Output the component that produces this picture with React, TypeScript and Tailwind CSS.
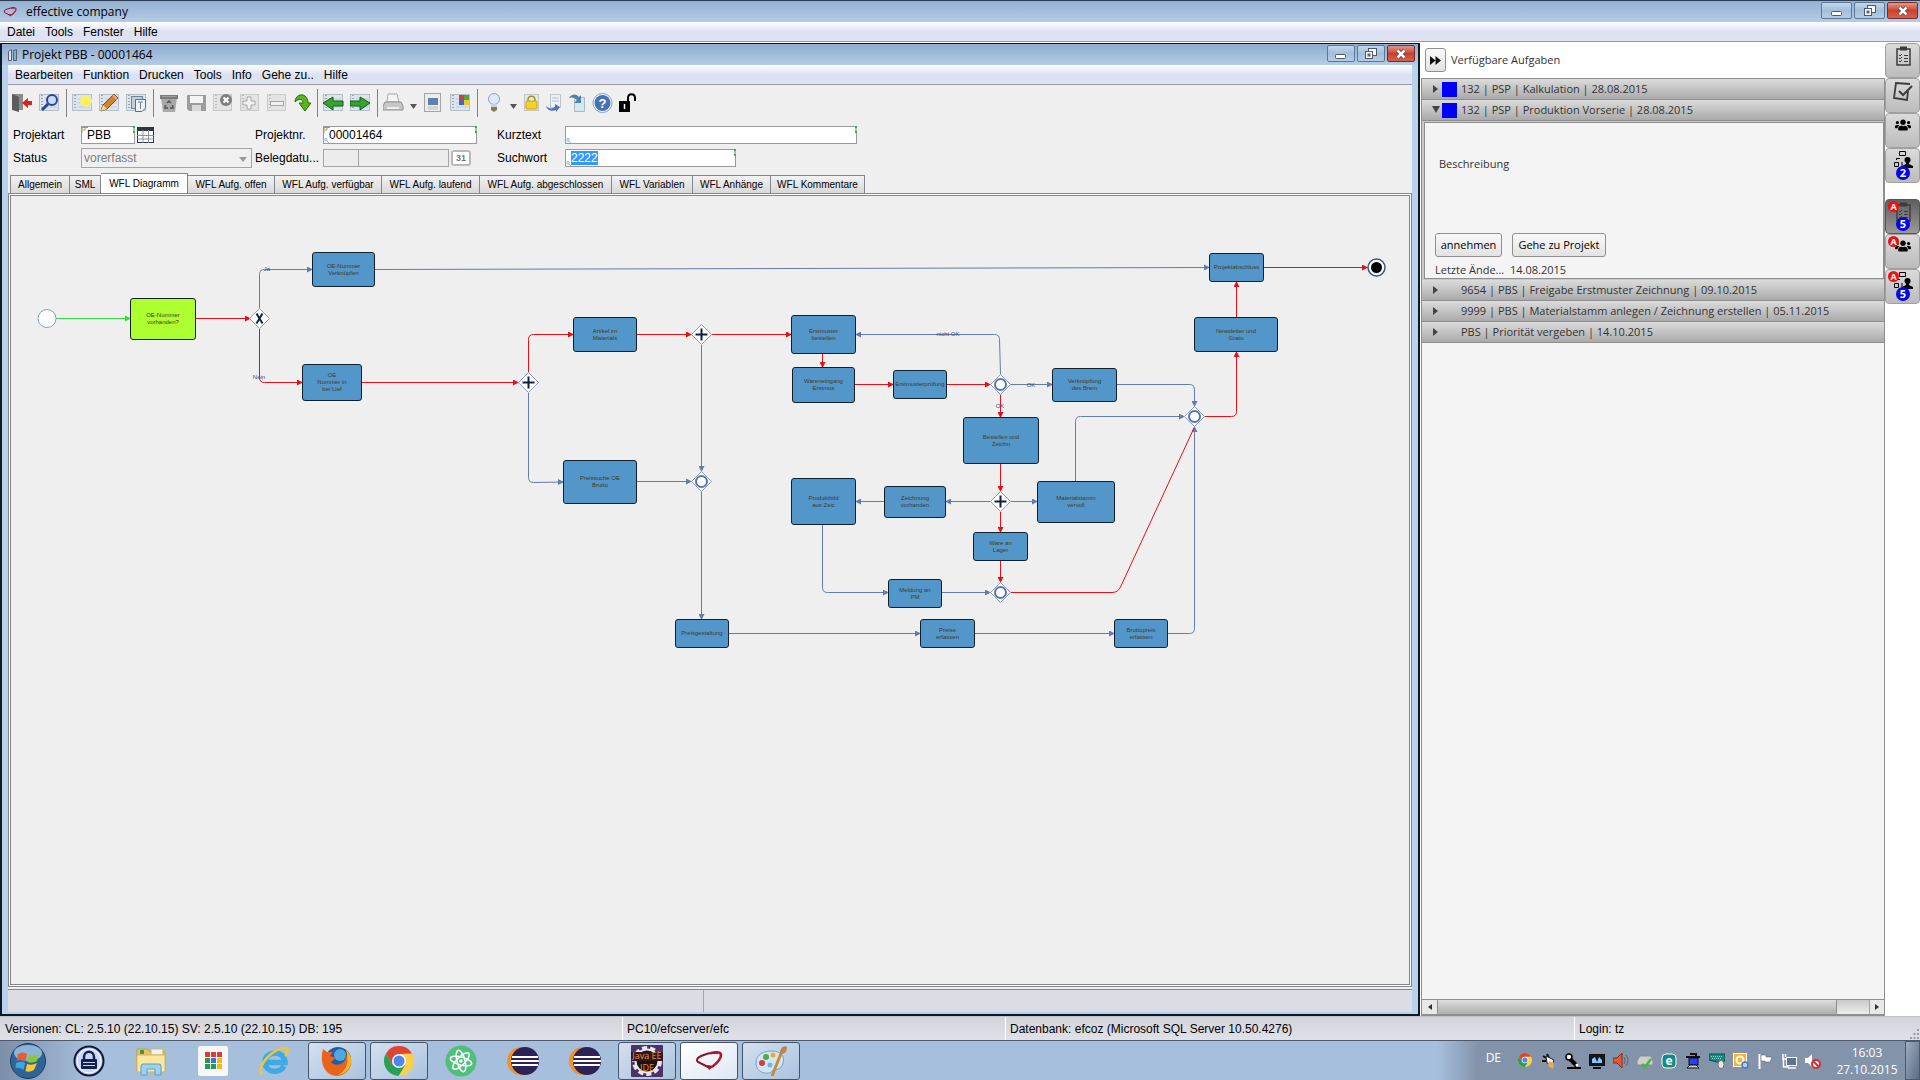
import React from "react";
import { FaUsers } from "react-icons/fa";

type TNode = {
  x: number;
  y: number;
  w: number;
  h: number;
  lines: string[];
  active?: boolean;
};

type TEdge = { d: string; color: "red" | "blue" | "green" };

const nodes: TNode[] = [
  { x: 119, y: 102, w: 66, h: 42, lines: ["OE-Nummer", "vorhanden?"], active: true },
  { x: 301, y: 56, w: 63, h: 35, lines: ["OE-Nummer", "Verknüpfen"] },
  { x: 291, y: 168, w: 60, h: 37, lines: ["OE", "Nummer in", "bei Lief"] },
  { x: 562, y: 121, w: 64, h: 35, lines: ["Artikel im", "Materials"] },
  { x: 780, y: 119, w: 65, h: 39, lines: ["Erstmuster", "bestellen"] },
  { x: 781, y: 171, w: 63, h: 36, lines: ["Wareneingang", "Erstmus"] },
  { x: 882, y: 174, w: 54, h: 29, lines: ["Erstmusterprüfung"] },
  { x: 952, y: 221, w: 76, h: 47, lines: ["Bestellen und", "Zeichn"] },
  { x: 552, y: 264, w: 74, h: 44, lines: ["Preissuche OE", "Brutto"] },
  { x: 780, y: 282, w: 65, h: 47, lines: ["Produktbild", "aus Zeic"] },
  { x: 873, y: 290, w: 62, h: 32, lines: ["Zeichnung", "vorhanden"] },
  { x: 962, y: 336, w: 55, h: 29, lines: ["Ware an", "Lager"] },
  { x: 877, y: 383, w: 54, h: 29, lines: ["Meldung an", "PM"] },
  { x: 664, y: 423, w: 54, h: 29, lines: ["Preisgestaltung"] },
  { x: 909, y: 423, w: 55, h: 29, lines: ["Preise", "erfassen"] },
  { x: 1103, y: 423, w: 54, h: 29, lines: ["Bruttopreis", "erfassen"] },
  { x: 1183, y: 121, w: 84, h: 35, lines: ["Newsletter und", "Gratu"] },
  { x: 1041, y: 172, w: 65, h: 34, lines: ["Verknüpfung", "des Brem"] },
  { x: 1026, y: 285, w: 78, h: 42, lines: ["Materialstamm", "vervoll"] },
  { x: 1198, y: 57, w: 55, h: 29, lines: ["Projektabschluss"] },
];

const edges: TEdge[] = [
  { d: "M45 122.5H119", color: "green" },
  { d: "M185 122.5H239", color: "red" },
  { d: "M248.5 112V78.5Q248.5 73.5 253.5 73.5H301", color: "blue" },
  { d: "M248.5 133V181.5Q248.5 186.5 253.5 186.5H291", color: "red" },
  { d: "M364 73.5L1198 71.5", color: "blue" },
  { d: "M351 186.5H507", color: "red" },
  { d: "M517.5 176V143.5Q517.5 138.5 522.5 138.5H562", color: "red" },
  { d: "M517.5 197V281.5Q517.5 286.5 522.5 286.5L552 286", color: "blue" },
  { d: "M626 138.5H680", color: "red" },
  { d: "M701 138.5H780", color: "red" },
  { d: "M690.5 149V275", color: "blue" },
  { d: "M626 285.5H680", color: "blue" },
  { d: "M690.5 296V423", color: "blue" },
  { d: "M811.5 158V171", color: "red" },
  { d: "M844 188.5H882", color: "red" },
  { d: "M936 188.5H979", color: "red" },
  { d: "M989.5 178L988.5 143.5Q988.5 138.5 983.5 138.5H845", color: "blue" },
  { d: "M989.5 199V221", color: "red" },
  { d: "M1000 188.5H1041", color: "blue" },
  { d: "M1106 188.5H1178.5Q1183.5 188.5 1183.5 193.5V210", color: "blue" },
  { d: "M1064.5 285V225.5Q1064.5 220.5 1069.5 220.5H1173", color: "blue" },
  { d: "M989.5 268V295", color: "red" },
  { d: "M979 305.5H935", color: "blue" },
  { d: "M1000 305.5H1026", color: "blue" },
  { d: "M873 305.5H845", color: "blue" },
  { d: "M989.5 316V336", color: "red" },
  { d: "M989.5 365V386", color: "red" },
  { d: "M811.5 329V391.5Q811.5 396.5 816.5 396.5H877", color: "blue" },
  { d: "M931 396.5H979", color: "blue" },
  { d: "M718 437.5H909", color: "blue" },
  { d: "M964 437.5H1103", color: "blue" },
  { d: "M1157 437.5H1178.5Q1183.5 437.5 1183.5 432.5V231", color: "blue" },
  { d: "M1194 220.5H1220.5Q1225.5 220.5 1225.5 215.5V156", color: "red" },
  { d: "M1225.5 121V86", color: "red" },
  { d: "M1253 71.5H1356", color: "red" },
];

const gateways = [
  { x: 248.5, y: 122.5, kind: "x" },
  { x: 517.5, y: 186.5, kind: "+" },
  { x: 690.5, y: 138.5, kind: "+" },
  { x: 690.5, y: 285.5, kind: "o" },
  { x: 989.5, y: 188.5, kind: "o" },
  { x: 989.5, y: 305.5, kind: "+" },
  { x: 989.5, y: 396.5, kind: "o" },
  { x: 1183.5, y: 220.5, kind: "o" },
];

const edgeLabels = [
  { x: 256, y: 75, text: "Ja" },
  { x: 248, y: 183, text: "Nein" },
  { x: 937, y: 140, text: "nicht OK" },
  { x: 1020, y: 191, text: "OK" },
  { x: 989, y: 212, text: "OK" },
];

const colors = { red: "#e31219", blue: "#657cab", green: "#2fdc3c" };

const Diagram = () => (
  <div className="relative min-h-[500px] flex-1 overflow-hidden bg-[#efefef]">
    <svg className="absolute inset-0 h-full w-full">
      <defs>
        {(["red", "blue", "green"] as const).map((c) => (
          <marker key={c} id={c} markerWidth="6" markerHeight="6" refX="5" refY="3" orient="auto">
            <path d="M0 0L6 3L0 6Z" fill={colors[c]} />
          </marker>
        ))}
      </defs>
      {edges.map((e) => (
        <path key={e.d} d={e.d} fill="none" stroke={colors[e.color]} markerEnd={`url(#${e.color})`} />
      ))}
      <path d="M1000 396.5H1101Q1107 396.5 1109.5 391L1183 232" fill="none" stroke={colors.red} />
      <circle cx="36" cy="122.5" r="9" fill="#fff" stroke="#8a9cc8" />
      <circle cx="1365.5" cy="71.5" r="8.5" fill="#fff" stroke="#3f5480" strokeWidth="1.5" />
      <circle cx="1365.5" cy="71.5" r="5.5" fill="#000" />
      {gateways.map((g) => (
        <g key={`${g.x}-${g.y}`} transform={`translate(${g.x} ${g.y})`}>
          <path d="M0-10L10 0L0 10L-10 0Z" fill="#fff" stroke="#8a9cc8" />
          {g.kind === "o" && <circle r="5.5" fill="#fff" stroke="#5e759f" strokeWidth="2" />}
          {g.kind === "+" && <path d="M-6 0H6M0-6V6" stroke="#14203a" strokeWidth="2" />}
          {g.kind === "x" && <path d="M-3-5L3 5M3-5L-3 5" stroke="#14203a" strokeWidth="2" />}
        </g>
      ))}
      {edgeLabels.map((l) => (
        <text key={`${l.x}-${l.y}`} x={l.x} y={l.y} fontSize="6" textAnchor="middle" fill="#3c4a78">
          {l.text}
        </text>
      ))}
    </svg>
    {nodes.map((n) => (
      <div
        key={`${n.x}-${n.y}`}
        className={`absolute flex flex-col items-center justify-center whitespace-nowrap rounded-[3px] border border-[#10202c] text-[6px] leading-[7px] text-[#453a1e] ${
          n.active ? "bg-[#adff2f]" : "bg-[#5396c9]"
        }`}
        style={{ left: n.x, top: n.y, width: n.w, height: n.h }}
      >
        {n.lines.map((line) => (
          <span key={line}>{line}</span>
        ))}
      </div>
    ))}
  </div>
);

const WindowButtons = ({ wide }: { wide?: boolean }) => {
  const size = `flex h-[17px] items-center justify-center rounded-[2px] border ${wide ? "w-[31px]" : "w-7"}`;
  const blue = "border-[#5d7896] bg-linear-to-b from-[#c3d6ea] via-[#a4bfdb] to-[#b4cde6]";
  return (
    <div className="flex gap-[2px] self-start pt-px">
      <button aria-label="Minimieren" className={`${size} ${blue}`}>
        <svg width="12" height="12">
          <rect x="0.5" y="6.5" width="10" height="4" rx="1" fill="#fff" stroke="#4d5a6b" />
        </svg>
      </button>
      <button aria-label="Wiederherstellen" className={`${size} ${blue}`}>
        <svg width="12" height="12">
          <rect x="3.5" y="0.5" width="8" height="7" fill="#fff" stroke="#4d5a6b" />
          <rect x="0.5" y="3.5" width="7" height="7" fill="#fff" stroke="#4d5a6b" />
          <rect x="3" y="6" width="2" height="2" fill="#8fa9c6" stroke="#4d5a6b" />
        </svg>
      </button>
      <button
        aria-label="Schließen"
        className={`${size} border-[#7a2d26] bg-linear-to-b from-[#e0978b] via-[#c9412e] to-[#d0634f]`}
      >
        <svg width="12" height="10">
          <path d="M2.5 1.5L9.5 8.5M9.5 1.5L2.5 8.5" stroke="#5b3a3a" strokeWidth="4" />
          <path d="M2.5 1.5L9.5 8.5M9.5 1.5L2.5 8.5" stroke="#fff" strokeWidth="2.5" />
        </svg>
      </button>
    </div>
  );
};

const EfcLogo = ({ size }: { size: number }) => (
  <svg width={size} height={size} viewBox="0 0 28 28">
    <path d="M15 21L3 15Q0 12 6 9Q15 5 23 6" fill="none" stroke="#8d1220" strokeWidth="2" />
    <path d="M16 6Q26 4 26 8Q26 13 17 20" fill="none" stroke="#b3152c" strokeWidth="2.5" />
    <path d="M12 18L19 19L14 23Z" fill="#a3152a" />
  </svg>
);

const Menu = ({ items }: { items: string[] }) => (
  <nav className="flex h-[19px] shrink-0 items-center gap-[10px] bg-linear-to-b from-white via-[#dce2f2] to-[#dfe3f3] px-[7px]">
    {items.map((item) => (
      <button key={item}>{item}</button>
    ))}
  </nav>
);

const Sheet = () => (
  <>
    <rect x="0.5" y="1.5" width="19" height="16" fill="#dce4ee" stroke="#b3becb" />
    <path d="M3 2V17" stroke="#9aa6b4" strokeWidth="2" strokeDasharray="1 2" />
    <path d="M6 6H18M6 10H18M6 14H18" stroke="#c0cbd8" />
  </>
);

const GreySheet = () => (
  <>
    <rect x="0.5" y="1.5" width="18" height="16" fill="#e4e4e4" stroke="#c9c9c9" />
    <path d="M3 2V17" stroke="#bbb" strokeWidth="2" strokeDasharray="1 2" />
  </>
);

const Separator = () => <div className="-mr-px h-7 w-px bg-[#808080]" />;

const ToolButton = ({
  label,
  narrow,
  children,
}: {
  label: string;
  narrow?: boolean;
  children: React.ReactNode;
}) => (
  <button aria-label={label} className={narrow ? "w-[17px]" : "w-[21px]"}>
    <svg className="h-5 w-full" viewBox={narrow ? "0 0 17 20" : "0 0 21 20"}>
      {children}
    </svg>
  </button>
);

const DropArrow = () => (
  <button aria-label="Mehr" className="w-[7px] pt-2">
    <svg width="7" height="5">
      <path d="M0 0H7L3.5 5Z" fill="#555" />
    </svg>
  </button>
);

const Toolbar = () => (
  <div className="flex h-[36px] items-center gap-[6px] border-t border-[#9a9aa2] pl-1">
    <ToolButton label="Beenden">
      <path d="M0 1H11V17H0Z" fill="#8b8b8b" />
      <path d="M0 1L7 4V19L0 17Z" fill="#5c5c5c" />
      <path d="M20 8H16V5L10 10L16 15V12H20Z" fill="#dd2222" />
    </ToolButton>
    <ToolButton label="Suchen">
      <Sheet />
      <circle cx="13" cy="7" r="5" fill="#c9dcf6" stroke="#2b4696" strokeWidth="2" />
      <path d="M9 11L3 17" stroke="#2b4696" strokeWidth="3" />
    </ToolButton>
    <Separator />
    <ToolButton label="Neu">
      <Sheet />
      <circle cx="14" cy="8" r="5" fill="#fff24a" stroke="#f5eb8f" strokeWidth="2" />
    </ToolButton>
    <ToolButton label="Bearbeiten">
      <Sheet />
      <path d="M2 18L4 12L15 1L19 5L8 16Z" fill="#d3852d" stroke="#7b4a16" />
      <path d="M14 2L18 6" stroke="#e7a5a5" strokeWidth="2" />
      <path d="M2 18L4 12L8 16Z" fill="#efd9a8" />
    </ToolButton>
    <ToolButton label="Kopieren">
      <Sheet />
      <rect x="5.5" y="3.5" width="11" height="12" fill="#c4cedd" stroke="#71819a" />
      <path d="M9.5 6.5H19.5V15L16 18.5H9.5Z" fill="#eef2f7" stroke="#5c6d86" />
      <path d="M14.5 9V16M12 9H17" stroke="#71819a" />
    </ToolButton>
    <Separator />
    <ToolButton label="Löschen">
      <path d="M2 5H18L16 19H4Z" fill="#a8a8a8" />
      <path d="M1 2H19V6H1Z" fill="#7b7b7b" />
      <path d="M3 3.5H17" stroke="#a0a0a0" />
      <path d="M8 10L10 8L12 10M6.5 12L6 15H9M13.5 12L14 15H11" fill="none" stroke="#555" strokeWidth="1.5" />
    </ToolButton>
    <ToolButton label="Speichern">
      <path d="M1 2H20V18H3L1 16Z" fill="#9c9c9c" />
      <rect x="4" y="3" width="13" height="7" fill="#f4f4f4" />
      <rect x="6" y="12" width="9" height="6" fill="#d9d9d9" />
    </ToolButton>
    <ToolButton label="Abbrechen">
      <GreySheet />
      <circle cx="13" cy="7" r="6" fill="#7f7f7f" />
      <path d="M10.5 4.5L15.5 9.5M15.5 4.5L10.5 9.5" stroke="#fff" strokeWidth="2" />
    </ToolButton>
    <ToolButton label="Zeile einfügen">
      <GreySheet />
      <path d="M7 4H11V8H15V12H11V16H7V12H3V8H7Z" fill="#f1f1f1" stroke="#a5a5a5" />
    </ToolButton>
    <ToolButton label="Zeile entfernen">
      <GreySheet />
      <rect x="3.5" y="8.5" width="13" height="4" fill="#f1f1f1" stroke="#a5a5a5" />
    </ToolButton>
    <ToolButton label="Aktualisieren" narrow>
      <path d="M1 9C1 3 7 0 11 3C13 5 14 7 14 10H17L11 18L5 10H9C9 6 5 5 1 9Z" fill="#56b81c" stroke="#2b6b0d" />
    </ToolButton>
    <Separator />
    <ToolButton label="Zurück">
      <Sheet />
      <path d="M0 10L10 4V8H20V13H10V17Z" fill="#35a32f" stroke="#155c14" />
    </ToolButton>
    <ToolButton label="Vor">
      <Sheet />
      <path d="M20 10L10 4V8H0V13H10V17Z" fill="#35a32f" stroke="#155c14" />
    </ToolButton>
    <Separator />
    <ToolButton label="Drucken">
      <path d="M5 1H14L16 9H4Z" fill="#f3f3f3" stroke="#a9a9a9" />
      <path d="M2 9H18L20 13V17H0V13Z" fill="#c7c7c7" stroke="#8f8f8f" />
      <path d="M4 15H16" stroke="#eee" strokeWidth="2" />
    </ToolButton>
    <DropArrow />
    <ToolButton label="Vorschau">
      <rect x="1.5" y="0.5" width="16" height="18" fill="#ececec" stroke="#a5a5a5" />
      <rect x="5" y="5" width="10" height="7" fill="#5c83ad" />
      <path d="M5 14H15M5 16H15" stroke="#bbb" />
    </ToolButton>
    <ToolButton label="Ansicht">
      <Sheet />
      <path d="M9 2H14V7H9Z" fill="#de3a2f" />
      <path d="M14 2H19V7H14Z" fill="#48a83c" />
      <path d="M9 7H14V12H9Z" fill="#3d66cf" />
      <path d="M14 7H19V12H14Z" fill="#efc830" />
    </ToolButton>
    <Separator />
    <ToolButton label="Hinweis">
      <circle cx="11" cy="6" r="5.5" fill="#dce9f8" stroke="#8fa3bd" />
      <path d="M8 11H14V14H8Z" fill="#c3d2e4" />
      <path d="M8 14H14V17L11 19L8 17Z" fill="#8a7b4c" />
    </ToolButton>
    <DropArrow />
    <ToolButton label="Sperren" narrow>
      <rect x="1.5" y="1.5" width="14" height="16" fill="#e6e6e6" stroke="#c5c5c5" />
      <path d="M5 9V7C5 2 12 2 12 7V9" fill="none" stroke="#a58f2b" strokeWidth="1.5" />
      <rect x="3" y="8" width="11" height="8" rx="1" fill="#f2d32c" stroke="#c9a516" />
    </ToolButton>
    <ToolButton label="Exportieren" narrow>
      <path d="M4.5 1.5H14.5V14.5H4.5Z" fill="#eef1f5" stroke="#bcc3cc" />
      <path d="M6 5H13M6 8H13" stroke="#b5bfcc" />
      <path d="M0 13C3 16 7 16 9 14V11L14 14L10 19V17C6 19 1 17 0 13Z" fill="#4a73b8" />
    </ToolButton>
    <ToolButton label="Importieren" narrow>
      <path d="M5.5 4.5H15.5V18.5H5.5Z" fill="#d5e8ee" stroke="#a9bcc6" />
      <path d="M0 5C2 1 7 0 10 4L12 2V10H5L8 7C5 4 3 4 0 5Z" fill="#4f83ad" />
    </ToolButton>
    <ToolButton label="Hilfe">
      <circle cx="10.5" cy="10" r="9.5" fill="#fff" stroke="#7d9ecb" />
      <circle cx="10.5" cy="10" r="8" fill="#4672b4" />
      <text x="10.5" y="14.5" fontSize="13" fontWeight="bold" textAnchor="middle" fill="#fff">?</text>
    </ToolButton>
    <ToolButton label="Entsperren" narrow>
      <path d="M0 8H11V19H0Z" fill="#000" />
      <path d="M9 9V5C9 0 16 0 16 5V8" fill="none" stroke="#000" strokeWidth="2" />
      <path d="M5.5 11V16" stroke="#fff" strokeWidth="1.5" />
    </ToolButton>
  </div>
);

// small required / search markers drawn in the corners of the entry fields
const FieldMarks = ({ required }: { required?: boolean }) => (
  <svg className="pointer-events-none absolute inset-0 h-full w-full">
    {required && <path d="M1 7V1.5H7M3 5V3H5" fill="none" stroke="#a59a4f" />}
    {!required && <path d="M2 12.5H4V15H2ZM4 15L6 17" fill="none" stroke="#9db9d8" />}
  </svg>
);

const EndMark = () => (
  <span className="pointer-events-none absolute right-0 top-0 h-[7px] w-[2px] border-y-2 border-[#4e9f57] bg-[#9fcaa3]" />
);

const fieldClass = "h-[18px] w-full border border-[#9a9a9a] bg-white pl-[5px] outline-none";

const HeaderForm = () => (
  <div className="grid grid-cols-[68px_174px_68px_174px_68px_auto] gap-y-1 pb-[5px] pl-[5px] pt-[6px]">
    <label htmlFor="art" className="self-center">Projektart</label>
    <div className="flex items-center gap-[2px]">
      <div className="relative w-[54px]">
        <input id="art" defaultValue="PBB" className={fieldClass} />
        <FieldMarks required />
        <EndMark />
      </div>
      <button aria-label="Auswahl">
        <svg width="17" height="16">
          <rect x="0.5" y="0.5" width="16" height="15" fill="#fff" stroke="#2d3742" />
          <path d="M0 2H17" stroke="#2d3742" strokeWidth="4" />
          <path d="M0 8.5H17M0 12H17M6 3V16M11.5 3V16" stroke="#8a949e" />
        </svg>
      </button>
    </div>
    <label htmlFor="nr" className="self-center">Projektnr.</label>
    <div className="relative w-[154px]">
      <input id="nr" defaultValue="00001464" className={fieldClass} />
      <FieldMarks required />
      <FieldMarks />
      <EndMark />
    </div>
    <label htmlFor="kurz" className="self-center">Kurztext</label>
    <div className="relative w-[292px]">
      <input id="kurz" className={fieldClass} />
      <FieldMarks />
      <EndMark />
    </div>

    <label htmlFor="status" className="self-center">Status</label>
    <div className="relative w-[171px]">
      <select
        id="status"
        disabled
        className="h-5 w-full appearance-none border border-[#a5a5a5] bg-[#f0f0f0] pl-[2px] text-[#7d7d7d]"
      >
        <option>vorerfasst</option>
      </select>
      <svg className="pointer-events-none absolute right-[5px] top-[9px]" width="8" height="5">
        <path d="M0 0H8L4 5Z" fill="#9a9a9a" />
      </svg>
    </div>
    <label htmlFor="beleg" className="self-center">Belegdatu...</label>
    <div className="flex items-center">
      <input id="beleg" disabled className="h-[18px] w-[36px] border border-[#a5a5a5] bg-[#ececec]" />
      <input aria-label="Belegdatum Ende" disabled className="-ml-px mr-[2px] h-[18px] w-[91px] border border-[#a5a5a5] bg-[#ececec]" />
      <button className="h-4 w-5 rounded-[3px] border-2 border-[#b9b9b9] bg-white text-[9px] font-bold leading-[10px] text-[#777]">
        31
      </button>
    </div>
    <label htmlFor="such" className="self-center">Suchwort</label>
    <div className="relative w-[171px] self-center">
      <input
        id="such"
        autoFocus
        defaultValue="2222"
        onFocus={(e) => e.target.select()}
        className={`${fieldClass} selection:bg-[#3399ff] selection:text-white`}
      />
      <FieldMarks />
      <EndMark />
    </div>
  </div>
);

const tabs = [
  { label: "Allgemein", width: "w-[60px]" },
  { label: "SML", width: "w-[31px]" },
  { label: "WFL Diagramm", width: "w-[87px]", selected: true },
  { label: "WFL Aufg. offen", width: "w-[87px]" },
  { label: "WFL Aufg. verfügbar", width: "w-[107px]" },
  { label: "WFL Aufg. laufend", width: "w-[98px]" },
  { label: "WFL Aufg. abgeschlossen", width: "w-[132px]" },
  { label: "WFL Variablen", width: "w-[81px]" },
  { label: "WFL Anhänge", width: "w-[78px]" },
  { label: "WFL Kommentare", width: "w-[94px]" },
];

const Tabs = () => (
  <div role="tablist" className="flex h-5 items-end pl-[2px] text-[10px]">
    {tabs.map((tab) => (
      <button
        key={tab.label}
        role="tab"
        aria-selected={!!tab.selected}
        className={`${tab.width} whitespace-nowrap border-r border-t border-[#84868f] first:border-l ${
          tab.selected ? "h-5 bg-white" : "h-[18px] bg-linear-to-b from-[#f2f2f2] to-[#d9d9d9]"
        }`}
      >
        {tab.label}
      </button>
    ))}
  </div>
);

const ProjectWindow = () => (
  <section className="flex min-w-0 flex-1 flex-col border-2 border-t border-[#0b1a26] bg-[#b9d1ea]">
    <header className="flex h-[21px] shrink-0 items-center justify-between bg-linear-to-b from-[#8facce] to-[#b4cce6] pl-[5px] pr-[3px]">
      <h2 className="flex items-center gap-1 font-['Open_Sans','Noto_Sans',sans-serif]">
        <svg width="11" height="14">
          <path d="M1.5 3.5L4.5 1.5V12.5H1.5Z" fill="#dfe7ee" stroke="#55606b" />
          <path d="M6.5 2.5L9.5 1.5V12.5H6.5Z" fill="#7fb0c4" stroke="#55606b" />
        </svg>
        Projekt PBB - 00001464
      </h2>
      <WindowButtons />
    </header>
    <div className="mx-[6px] flex flex-1 flex-col bg-[#efefef]">
      <Menu items={["Bearbeiten", "Funktion", "Drucken", "Tools", "Info", "Gehe zu..", "Hilfe"]} />
      <Toolbar />
      <HeaderForm />
      <Tabs />
      <div className="flex flex-1 flex-col border border-[#84868f] bg-white p-px">
        <div className="flex flex-1 flex-col border border-[#84868f]">
          <Diagram />
        </div>
      </div>
      <div className="mt-[2px] flex h-[23px] border-t border-[#84868f] bg-[#dcdde4]">
        <div className="w-[calc(50%-6px)] border-r border-[#a5a5ad]" />
      </div>
    </div>
    <div className="h-[2px]" />
  </section>
);

const tasks = [
  { title: "132 | PSP | Kalkulation | 28.08.2015", marked: true },
  { title: "132 | PSP | Produktion Vorserie | 28.08.2015", marked: true, open: true },
  { title: "9654 | PBS | Freigabe Erstmuster Zeichnung | 09.10.2015" },
  { title: "9999 | PBS | Materialstamm anlegen / Zeichnung erstellen | 05.11.2015" },
  { title: "PBS | Priorität vergeben | 14.10.2015" },
];

const smallButton =
  "rounded-[3px] border border-[#8f8f8f] bg-linear-to-b from-[#fafafa] to-[#e2e2e2] text-black";

const TaskPanel = () => (
  <aside className="flex w-[464px] shrink-0 flex-col font-['Open_Sans','Noto_Sans',sans-serif] text-[11px] text-[#333]">
    <div className="flex h-9 items-center gap-[5px] bg-white pl-1">
      <button aria-label="Einklappen" className={`${smallButton} flex h-6 w-[21px] items-center justify-center`}>
        <svg width="11" height="9">
          <path d="M0 0L5.5 4.5L0 9ZM5.5 0L11 4.5L5.5 9Z" fill="#111" />
        </svg>
      </button>
      <h2>Verfügbare Aufgaben</h2>
    </div>
    <div className="flex flex-1 flex-col border-x border-t border-[#8e8e8e] bg-[#f4f4f4]">
      {tasks.map((task) => (
        <div key={task.title}>
          <button className="flex h-[21px] w-full items-center border-b border-[#8e8e8e] bg-linear-to-b from-[#dcdcdc] to-[#aaaaaa] pl-[10px] text-left">
            <svg width="10" height="8">
              {task.open ? (
                <path d="M0 0H8L4 7Z" fill="#444" />
              ) : (
                <path d="M1 0L6 4L1 8Z" fill="#444" />
              )}
            </svg>
            <span className={`mr-1 h-[15px] w-[15px] ${task.marked ? "bg-[#0000fe]" : ""}`} />
            {task.title}
          </button>
          {task.open && (
            <div className="bg-[#c8c8c8] py-px pl-[2px]">
              <div className="border border-[#8e8e8e] bg-[#f4f4f4] pl-[10px]">
                <p className="pl-1 pt-[33px]">Beschreibung</p>
                <div className="flex gap-[10px] pt-[61px]">
                  <button className={`${smallButton} h-6 w-[67px]`}>annehmen</button>
                  <button className={`${smallButton} h-6 w-[94px]`}>Gehe zu Projekt</button>
                </div>
                <dl className="flex pt-[5px]">
                  <dt className="w-[75px] whitespace-nowrap">Letzte Ände...</dt>
                  <dd>14.08.2015</dd>
                </dl>
              </div>
            </div>
          )}
        </div>
      ))}
    </div>
    <div className="flex h-[17px] border border-b-2 border-[#8e8e8e] bg-linear-to-b from-[#c9c9c9] to-[#ededed]">
      <button aria-label="Links" className="flex w-[15px] items-center justify-center bg-[#e8e8e8]">
        <svg width="4" height="6">
          <path d="M4 0V6L0 3Z" fill="#333" />
        </svg>
      </button>
      <div className="mr-8 flex-1 rounded-[1px] border-x border-[#8e8e8e] bg-linear-to-b from-[#dddddd] to-[#aeaeae]" />
      <button aria-label="Rechts" className="flex w-[15px] items-center justify-center border-l border-[#a5a5a5] bg-[#e8e8e8]">
        <svg width="4" height="6">
          <path d="M0 0V6L4 3Z" fill="#333" />
        </svg>
      </button>
    </div>
  </aside>
);

const WorkflowIcon = () => (
  <svg className="absolute left-[7px] top-[2px]" width="20" height="18">
    <path d="M6.5 0.5H12.5V4.5H6.5ZM1.5 11.5H5.5V15.5H1.5ZM3.5 9V7.5H7" fill="none" stroke="#000" />
    <path d="M9 11V16" stroke="#000" />
    <circle cx="14.5" cy="9" r="3" />
    <path d="M13 11H16V13L20 15V17H9V15L13 13Z" />
  </svg>
);

const SideIcon = ({ kind }: { kind: string }) => {
  if (kind === "flow") return <WorkflowIcon />;
  if (kind === "users") return <FaUsers className="absolute left-[9px] top-[3px] text-[16px] text-black" />;
  if (kind === "check")
    return (
      <svg className="absolute left-[7px] top-[2px]" width="20" height="20" fill="none" stroke="#3c3c3c">
        <path d="M15 10L14 19L1 17L3 2L17 3" strokeWidth="1.8" />
        <path d="M6 10L10 14L19 5" strokeWidth="2" />
      </svg>
    );
  return (
    <svg className="absolute left-[10px] top-[2px]" width="15" height="20" fill="none" stroke="#3c3c3c">
      <rect x="1" y="3" width="13" height="16" strokeWidth="1.5" />
      <path d="M4 2.5H11" strokeWidth="4" />
      <path d="M3 9L4 10L6 8M3 12L4 13L6 11M3 15L4 16L6 14M8 9.5H12M8 12.5H12M8 15.5H12" />
    </svg>
  );
};

const sideItems = [
  { label: "Aufgaben", kind: "list" },
  { label: "Erledigt", kind: "check" },
  { label: "Team", kind: "users" },
  { label: "Workflow", kind: "flow", count: 2 },
  { label: "Neue Aufgaben", kind: "list", alert: true, count: 5, pressed: true },
  { label: "Neue Teamaufgaben", kind: "users", alert: true },
  { label: "Neue Workflows", kind: "flow", alert: true, count: 5 },
];

const SideBar = () => (
  <aside className="w-[35px] shrink-0 bg-white pt-px font-['Open_Sans','Noto_Sans',sans-serif]">
    {sideItems.map((item) => (
      <button
        key={item.label}
        aria-label={item.label}
        className={`relative block h-[35px] w-full rounded-[4px] border ${
          item.pressed
            ? "mt-4 border-[#555] bg-linear-to-b from-[#5f5f5f] to-[#9a9a9a]"
            : "border-[#a0a0a0] bg-linear-to-b from-[#dadada] to-[#bcbcbc]"
        }`}
      >
        <SideIcon kind={item.kind} />
        {item.alert && (
          <span className="absolute left-[2px] top-px h-[11px] w-[11px] rounded-full bg-[#ee1111] text-[9px] font-bold leading-[11px] text-white">
            A
          </span>
        )}
        {item.count && (
          <span className="absolute bottom-[2px] left-[10px] h-[14px] w-[14px] rounded-full bg-[#0505e8] text-[11px] font-bold leading-[14px] text-white">
            {item.count}
          </span>
        )}
      </button>
    ))}
  </aside>
);

const StatusBar = () => (
  <footer className="flex h-6 shrink-0 items-center border-t border-[#c2c3ca] bg-linear-to-b from-[#d4d5dc] to-[#e0e1e7]">
    <div className="flex h-full w-[623px] items-center border-r border-white pl-[5px]">
      Versionen: CL: 2.5.10 (22.10.15) SV: 2.5.10 (22.10.15) DB: 195
    </div>
    <div className="flex h-full w-[383px] items-center border-r border-white pl-1">PC10/efcserver/efc</div>
    <div className="flex h-full w-[569px] items-center border-r border-white pl-1">
      Datenbank: efcoz (Microsoft SQL Server 10.50.4276)
    </div>
    <div className="flex-1 pl-1">Login: tz</div>
    <svg width="12" height="12" className="self-end">
      <path d="M10 1V12M6.5 5V12M3 9V12" stroke="#9b9ba3" strokeWidth="2" strokeDasharray="2 2" />
    </svg>
  </footer>
);

const ChromeIcon = ({ size }: { size: number }) => (
  <svg width={size} height={size} viewBox="0 0 30 30">
    <circle cx="15" cy="15" r="15" fill="#fdd047" />
    <path d="M2 7.5A15 15 0 0 1 28 7.5L15 8L8.5 19Z" fill="#dc4437" />
    <path d="M2 7.5A15 15 0 0 0 14.5 30L21.5 18.5L8.5 19Z" fill="#26a05c" />
    <circle cx="15" cy="15" r="7" fill="#fff" />
    <circle cx="15" cy="15" r="5.5" fill="#4a87ee" />
  </svg>
);

const EclipseIcon = () => (
  <svg width="32" height="30" viewBox="0 0 32 30">
    <circle cx="14" cy="15" r="14" fill="#f0922b" />
    <circle cx="18" cy="15" r="14" fill="#2c2255" />
    <path d="M5 11H31M4 15H32M5 19H31" stroke="#fff" strokeWidth="2" />
  </svg>
);

const apps = [
  {
    label: "KeePass",
    icon: (
      <svg width="32" height="32">
        <circle cx="16" cy="16" r="14.5" fill="#b7c8ff" stroke="#111a33" strokeWidth="2" />
        <circle cx="16" cy="16" r="12" fill="#c9d6ff" stroke="#fff" />
        <path d="M11 15V12C11 5 21 5 21 12V15" fill="none" stroke="#16204a" strokeWidth="2.5" />
        <rect x="8" y="14" width="16" height="10" rx="1" fill="#16204a" />
        <path d="M10 17.5H22M10 20.5H22" stroke="#c5d1ff" />
      </svg>
    ),
  },
  {
    label: "Explorer",
    icon: (
      <svg width="32" height="30">
        <path d="M2 3H13L15 6H30V25H2Z" fill="#e8c667" stroke="#c79b39" />
        <path d="M5 4H9V8H5Z" fill="#3a9a4b" />
        <path d="M16 3H28V9H16Z" fill="#f2f2f2" stroke="#d5b356" />
        <path d="M2 9H30V26H2Z" fill="#fbe7a0" stroke="#d5b356" />
        <path d="M6 29V20Q6 18 8 18H24Q26 18 26 20V29H20V23H12V29Z" fill="#9bd2f2" stroke="#5a9cc8" />
      </svg>
    ),
  },
  {
    label: "Apps",
    icon: (
      <svg width="30" height="30">
        <rect width="30" height="30" rx="2" fill="#f7f7f7" />
        <path d="M7 6H12V11H7ZM13 6H18V11H13ZM19 6H24V11H19Z" fill="#de3b32" />
        <path d="M7 12H12V17H7Z" fill="#219c51" />
        <path d="M13 12H18V17H13Z" fill="#3774e0" />
        <path d="M19 12H24V17H19ZM19 18H24V23H19Z" fill="#f2b828" />
        <path d="M7 18H12V23H7ZM13 18H18V23H13Z" fill="#219c51" />
      </svg>
    ),
  },
  {
    label: "Internet Explorer",
    icon: (
      <svg width="34" height="32">
        <path d="M26 21C22 29 7 28 7 17C7 5 27 5 27 17.5H8" fill="none" stroke="#3fa9e6" strokeWidth="5.5" />
        <path d="M4 29C-2 22 14 3 28 3C31 4 29 9 27 11" fill="none" stroke="#f3c532" strokeWidth="2.5" />
      </svg>
    ),
  },
  {
    label: "Firefox",
    open: true,
    icon: (
      <svg width="32" height="32">
        <circle cx="17" cy="15" r="13" fill="#1f5fa8" />
        <circle cx="19" cy="10" r="6" fill="#4fa9dd" />
        <path d="M2 4L6 7L12 7L9 11L15 13L10 17C14 22 24 20 25 12C28 9 25 5 24 4C35 12 31 30 16 31C4 31 -2 18 2 4Z" fill="#e8641b" />
        <path d="M25 5C35 14 29 29 17 30C27 25 28 15 25 5Z" fill="#f8b62c" />
      </svg>
    ),
  },
  { label: "Chrome", open: true, icon: <ChromeIcon size={30} /> },
  {
    label: "Atom",
    icon: (
      <svg width="32" height="32" fill="none" stroke="#fff" strokeWidth="1.5">
        <circle cx="16" cy="16" r="15.5" fill="#4fc07a" stroke="none" />
        <ellipse cx="16" cy="16" rx="4" ry="11" transform="rotate(-15 16 16)" />
        <ellipse cx="16" cy="16" rx="4" ry="11" transform="rotate(45 16 16)" />
        <ellipse cx="16" cy="16" rx="4" ry="11" transform="rotate(105 16 16)" />
        <circle cx="16" cy="16" r="1" fill="#fff" />
      </svg>
    ),
  },
  { label: "Eclipse", icon: <EclipseIcon /> },
  { label: "Eclipse Workspace", icon: <EclipseIcon /> },
  {
    label: "Eclipse Java EE",
    open: true,
    icon: (
      <svg width="32" height="32">
        <rect width="32" height="32" rx="1" fill="#4b3268" />
        <circle cx="16" cy="16" r="13" fill="none" stroke="#e6e6ec" strokeWidth="4" strokeDasharray="5 3" />
        <circle cx="16" cy="16" r="11.5" fill="#1b1412" stroke="#e6e6ec" strokeWidth="2" />
        <path d="M0 7H32V16H0Z" fill="#2a1a2c" />
        <text x="16" y="14" fontSize="9" textAnchor="middle" fill="#f58a1f">Java EE</text>
        <text x="16" y="26" fontSize="9" textAnchor="middle" fill="#f58a1f">IDE</text>
      </svg>
    ),
  },
  { label: "effective company", open: true, current: true, icon: <EfcLogo size={28} /> },
  {
    label: "Paint",
    open: true,
    icon: (
      <svg width="34" height="32">
        <path d="M2 18C2 9 10 6 18 6C27 6 31 12 29 18C27 26 20 24 18 26C16 30 2 29 2 18Z" fill="#cfe6f7" stroke="#6fa1c6" />
        <circle cx="8" cy="18" r="3" fill="#d8402f" />
        <circle cx="12" cy="12" r="3" fill="#4cae46" />
        <circle cx="19" cy="10" r="2.5" fill="#f0a92d" />
        <circle cx="16" cy="20" r="2.5" fill="#6fb8e6" />
        <path d="M28 6L18 31" stroke="#c98a3a" strokeWidth="3" />
        <path d="M26 8C26 3 30 0 33 2C33 6 31 9 28 9Z" fill="#b98850" />
      </svg>
    ),
  },
];

const trayIcons: { label: string; icon: React.ReactNode }[] = [
  { label: "Chrome", icon: <ChromeIcon size={14} /> },
  {
    label: "Biene",
    icon: (
      <svg width="16" height="16">
        <path d="M2 3L7 6M6 1L8 5M1 8L6 8" stroke="#111" strokeWidth="2" />
        <path d="M5 3L13 7L11 13L6 10Z" fill="#fff" stroke="#222" />
        <path d="M8 8L13 10L12 16L7 13Z" fill="#e8a95a" />
      </svg>
    ),
  },
  {
    label: "Werkzeug",
    icon: (
      <svg width="16" height="16">
        <circle cx="4" cy="4" r="3" fill="#fff" stroke="#000" strokeWidth="1.5" />
        <path d="M5 6L12 13" stroke="#000" strokeWidth="4" />
        <path d="M2 15H16" stroke="#000" strokeWidth="2" />
        <circle cx="12" cy="12" r="1.5" fill="#fff" />
      </svg>
    ),
  },
  {
    label: "Monitor",
    icon: (
      <svg width="16" height="16">
        <rect x="0.5" y="1.5" width="15" height="11" fill="#0a1a2c" stroke="#111" />
        <path d="M3 10V6L6 4L8 9L10 4L13 7V10Z" fill="#8fc3ea" />
        <path d="M4 15H12" stroke="#111" strokeWidth="2" />
      </svg>
    ),
  },
  {
    label: "Ton",
    icon: (
      <svg width="16" height="16">
        <path d="M0 5H4L9 0V15L4 10H0Z" fill="#dd5a3d" stroke="#8a2a18" />
        <path d="M11 4Q13 7.5 11 11M13 2Q17 7.5 13 13" fill="none" stroke="#6e5c5c" />
      </svg>
    ),
  },
  {
    label: "Laufwerk",
    icon: (
      <svg width="16" height="16">
        <path d="M3 3H14L16 8V12H0V8Z" fill="#cfcfcf" stroke="#8a8a8a" />
        <path d="M5 11L8 14L14 6" fill="none" stroke="#3dbb3d" strokeWidth="2.5" />
      </svg>
    ),
  },
  {
    label: "ESET",
    icon: (
      <svg width="16" height="16">
        <rect x="1" y="1" width="14" height="14" rx="4" fill="#148a86" stroke="#fff" />
        <text x="8" y="12" fontSize="12" fontWeight="bold" textAnchor="middle" fill="#fff">e</text>
      </svg>
    ),
  },
  {
    label: "Netzwerk",
    icon: (
      <svg width="16" height="16">
        <path d="M1 4H15M5 1H11V4" fill="none" stroke="#111" strokeWidth="2" />
        <rect x="4" y="5" width="9" height="7" fill="#2c3cff" stroke="#111" />
        <path d="M2 15L5 12H11L14 15Z" fill="#ccc" stroke="#111" />
      </svg>
    ),
  },
  {
    label: "Tastatur",
    icon: (
      <svg width="16" height="16">
        <path d="M0 1H16V8L8 9L0 7Z" fill="#168a80" stroke="#0a4d48" />
        <path d="M2 3.5H14M3 5.5H13" stroke="#8fd6cf" strokeDasharray="1 1" />
        <ellipse cx="12" cy="11.5" rx="3" ry="4" fill="#e8e8e8" stroke="#777" />
      </svg>
    ),
  },
  {
    label: "Outlook",
    icon: (
      <svg width="16" height="16">
        <rect x="0.5" y="0.5" width="13" height="13" fill="#f7b52c" stroke="#fff" />
        <circle cx="7" cy="7" r="3.5" fill="none" stroke="#fff" strokeWidth="2" />
        <circle cx="12" cy="12" r="3" fill="#b6d1f2" stroke="#4a78b8" strokeWidth="1.5" />
      </svg>
    ),
  },
  {
    label: "Wartung",
    icon: (
      <svg width="16" height="16">
        <path d="M2.5 1V16" stroke="#fff" strokeWidth="2" />
        <path d="M4 2H9V4H15L13 9H8V8H4Z" fill="#fff" stroke="#555" strokeWidth="0.5" />
      </svg>
    ),
  },
  {
    label: "LAN",
    icon: (
      <svg width="16" height="16" fill="none" stroke="#fff">
        <rect x="5.5" y="4.5" width="10" height="8" fill="#62728a" />
        <path d="M7 15H15M2 1V6H5M4.5 1V4M2.5 6V14H8" strokeWidth="1.5" />
      </svg>
    ),
  },
  {
    label: "Stumm",
    icon: (
      <svg width="16" height="16">
        <path d="M0 5H3L7 1V14L3 10H0Z" fill="#fff" />
        <circle cx="11" cy="11" r="4" fill="#fff" stroke="#d92b2b" strokeWidth="2" />
        <path d="M8 8L14 14" stroke="#d92b2b" strokeWidth="2" />
      </svg>
    ),
  },
];

const Taskbar = () => (
  <footer className="flex h-10 shrink-0 items-center justify-between border-t border-[#4b5a6e] bg-[#a6bfdc] font-['Open_Sans','Noto_Sans',sans-serif]">
    <div className="flex h-full items-center gap-1 bg-linear-to-r from-[#7c8fa9] to-[#a6bfdc] to-[90px]">
      <button aria-label="Start" className="flex w-14 justify-center">
        <svg width="38" height="38">
          <circle cx="19" cy="19" r="17.5" fill="#2e6598" stroke="#1d3c5e" />
          <ellipse cx="19" cy="11" rx="14" ry="8" fill="#8db4d5" />
          <path d="M9 12Q14 9 18 12L16.5 19Q12 16.5 7.5 19Z" fill="#ea5b2c" />
          <path d="M20 13Q25 15 30 12L28 19Q23 22 18.5 20Z" fill="#8cc63f" />
          <path d="M7 21Q12 18.5 16 21L14.5 28Q10 25 6.5 26Z" fill="#3fa4e0" />
          <path d="M18 22Q23 24 28 21L25 28Q20 31 16.5 29Z" fill="#fbc92b" />
        </svg>
      </button>
      {apps.map((app) => (
        <button
          key={app.label}
          aria-label={app.label}
          className={`flex h-[38px] w-[58px] items-center justify-center rounded-[3px] border ${
            app.current
              ? "border-[#42536a] bg-linear-to-br from-[#ffffff] to-[#dde7f3]"
              : app.open
                ? "border-[#42536a] bg-linear-to-br from-[#d3e0ef] to-[#abc3df]"
                : "border-transparent"
          }`}
        >
          {app.icon}
        </button>
      ))}
    </div>
    <div className="flex h-full items-center bg-linear-to-r from-[#a6bfdc] to-[#8393aa] to-[40px] pl-12 text-white">
      <button className="pb-[6px] pr-4">DE</button>
      <div className="flex gap-2">
        {trayIcons.map((tray) => (
          <button key={tray.label} aria-label={tray.label} className="flex w-4 justify-center">
            {tray.icon}
          </button>
        ))}
      </div>
      <time className="w-[84px] pl-2 text-center leading-[17px]">
        16:03
        <br />
        27.10.2015
      </time>
      <button aria-label="Desktop anzeigen" className="h-full w-[15px] border border-[#4b5a6e] bg-linear-to-br from-[#9fadc0] to-[#5c6c84]" />
    </div>
  </footer>
);

const App = () => (
  <div className="flex min-h-screen flex-col bg-white font-['Liberation_Sans',Arial,sans-serif] text-[12px] leading-4 text-black">
    <header className="flex h-[22px] shrink-0 items-center justify-between border-t border-[#2c3e55] bg-linear-to-b from-[#94b1d1] to-[#b4cce6] pl-[3px] pr-[2px]">
      <h1 className="flex items-center gap-[9px] font-['Open_Sans','Noto_Sans',sans-serif]">
        <EfcLogo size={14} />
        effective company
      </h1>
      <WindowButtons wide />
    </header>
    <Menu items={["Datei", "Tools", "Fenster", "Hilfe"]} />
    <main className="flex flex-1 border-t border-[#9a9aa2]">
      <div className="flex min-w-0 flex-1 pr-px pt-px">
        <ProjectWindow />
      </div>
      <TaskPanel />
      <SideBar />
    </main>
    <StatusBar />
    <Taskbar />
  </div>
);

export default App;
